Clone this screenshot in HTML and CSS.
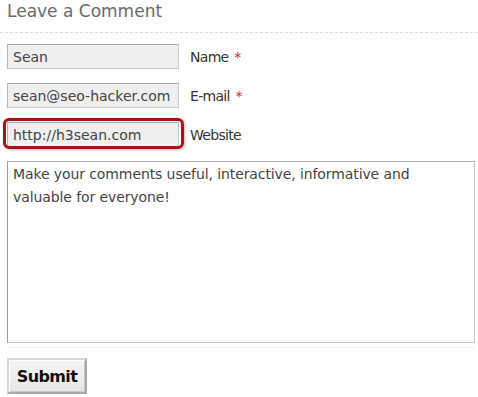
FILE: index.html
```html
<!DOCTYPE html>
<html>
<head>
<meta charset="utf-8">
<link rel="stylesheet" href="styles.css">
</head>
<body>
<div class="comment-form">
  <h3 class="title">Leave a Comment</h3>
  <div class="row">
    <input class="field" type="text" value="Sean">
    <label class="label">Name <span class="req">*</span></label>
  </div>
  <div class="row">
    <input class="field" type="text" value="sean@seo-hacker.com">
    <label class="label">E-mail <span class="req">*</span></label>
  </div>
  <div class="row">
    <span class="field-wrap">
      <input class="field" type="text" value="http://h3sean.com">
      <span class="highlight"></span>
    </span>
    <label class="label">Website</label>
  </div>
  <textarea class="message">Make your comments useful, interactive, informative and valuable for everyone!</textarea>
  <div class="divider"></div>
  <button class="submit" type="button">Submit</button>
</div>
</body>
</html>
```
FILE: styles.css
```css
html, body {
  margin: 0;
  padding: 0;
  background: #fff;
}
.comment-form {
  padding: 0 3px 0 7px;
  font-family: "DejaVu Sans", Verdana, sans-serif;
}
.title {
  margin: 0 -3px 0 -7px;
  padding: 0 0 10px 7px;
  font-size: 17px;
  line-height: 22px;
  font-weight: normal;
  color: #6b6b6b;
  border-bottom: 1px dashed #dcdcdc;
}
.row {
  display: flex;
  align-items: center;
  margin-top: 11px;
  height: 25px;
}
.row + .row {
  margin-top: 14px;
}
.field-wrap {
  position: relative;
  display: block;
  height: 25px;
}
.field {
  box-sizing: border-box;
  width: 172px;
  height: 25px;
  margin: 0;
  padding: 0 5px;
  border: 1px solid #c8c8c8;
  border-top-color: #a9a9a9;
  border-left-color: #b5b5b5;
  background: #efefef;
  font-family: "DejaVu Sans", Verdana, sans-serif;
  font-size: 14px;
  color: #444;
  display: block;
}
.highlight {
  position: absolute;
  left: -4px;
  top: -4px;
  right: -5px;
  bottom: -2px;
  border: 3px solid #a0161b;
  border-radius: 6px;
  box-shadow: 1px 1px 3px rgba(120, 30, 30, 0.35);
  pointer-events: none;
}
.label {
  margin-left: 11px;
  font-size: 14px;
  letter-spacing: -0.7px;
  color: #333;
}
.req {
  color: #c0282d;
  margin-left: 2px;
}
.message {
  box-sizing: border-box;
  display: block;
  width: 468px;
  height: 182px;
  margin: 14px 0 0 0;
  padding: 1px 5px;
  border: 1px solid #c4c4c4;
  border-left-color: #9a9a9a;
  border-top-color: #b0b0b0;
  font-family: "DejaVu Sans", Verdana, sans-serif;
  font-size: 14px;
  letter-spacing: -0.1px;
  line-height: 23px;
  color: #444;
  resize: none;
  background: #fff;
}
.divider {
  height: 1px;
  width: 468px;
  margin-top: 4px;
  background: #f1f1f1;
}
.submit {
  display: block;
  box-sizing: border-box;
  margin-top: 10px;
  width: 80px;
  height: 36px;
  padding: 0;
  font-family: "DejaVu Sans", Verdana, sans-serif;
  font-size: 16px;
  letter-spacing: -0.6px;
  font-weight: bold;
  color: #111;
  background: linear-gradient(#f6f6f6, #e6e6e6);
  border: 2px solid #a8a8a8;
  border-top-color: #d8d8d8;
  border-left-color: #d8d8d8;
  box-shadow: inset 1px 1px 0 #fff, inset -1px -1px 0 #c8c8c8;
}
```
